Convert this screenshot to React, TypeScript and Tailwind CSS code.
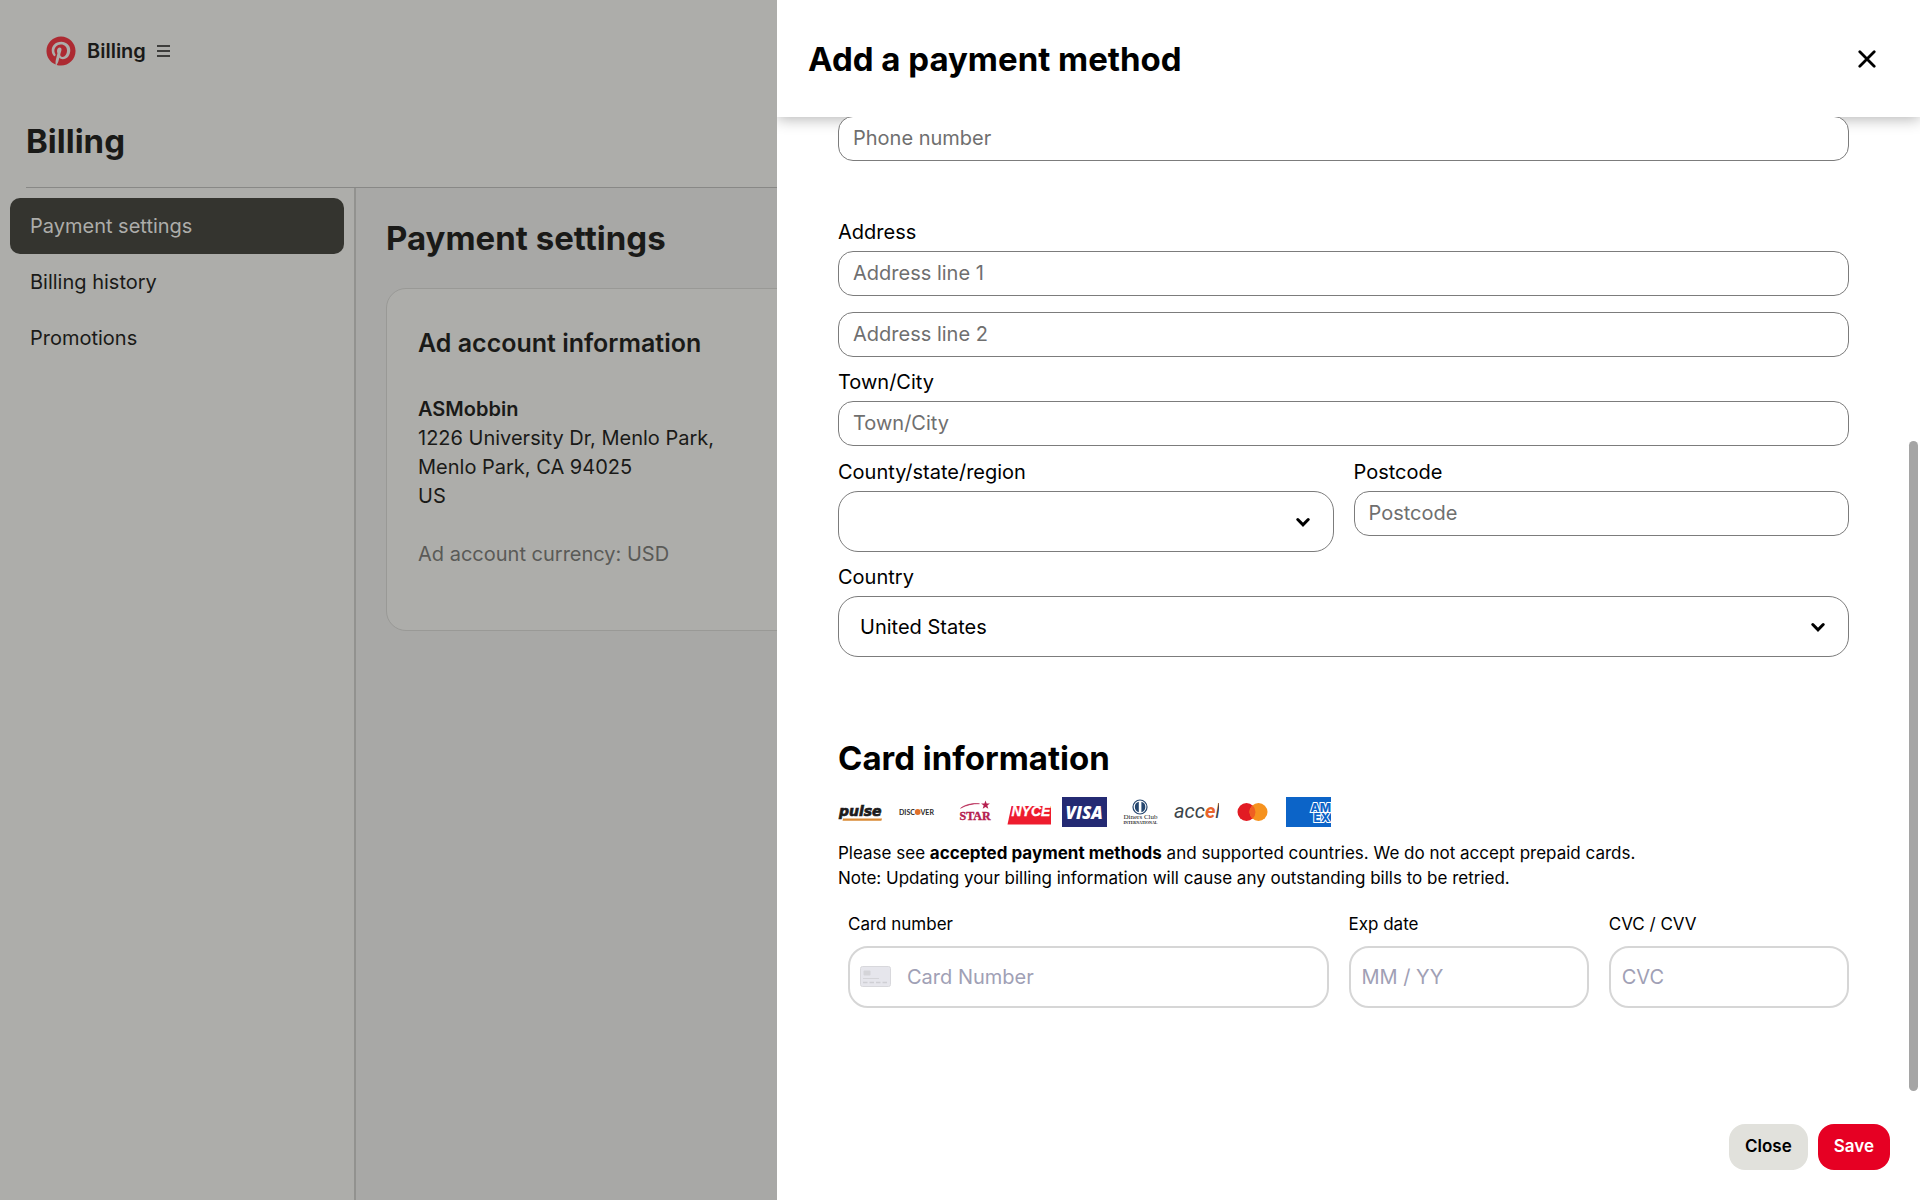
import { useState } from 'react'
import { FaPinterest } from 'react-icons/fa'

const navItems = ['Payment settings', 'Billing history', 'Promotions']

const inputClass =
    'block h-[45px] w-full rounded-[15px] border border-[#7c7c7c] bg-white px-[14px] pb-0.5 text-xl text-black outline-none placeholder:text-[#6f6f6f] focus:border-[#435ee5]'

const cardInputClass =
    'block h-[62px] w-full rounded-[20px] border-2 border-[#d6d6d6] bg-white pr-3 text-xl text-black outline-none placeholder:text-[#a0a0b5] focus:border-[#435ee5]'

type FieldProps = {
    id: string
    label?: string
    placeholder: string
}

function TextField({ id, label, placeholder }: FieldProps) {
    return (
        <div>
            {label && (
                <label htmlFor={id} className="block pb-[5px] text-xl leading-7">
                    {label}
                </label>
            )}
            <input id={id} type="text" aria-label={label ? undefined : placeholder} placeholder={placeholder} className={inputClass} />
        </div>
    )
}

function SelectField({ id, label, options }: { id: string; label: string; options: string[] }) {
    return (
        <div>
            <label htmlFor={id} className="block pb-[5px] text-xl leading-7">
                {label}
            </label>
            <div className="relative">
                <select
                    id={id}
                    className="block h-[61px] w-full appearance-none rounded-[20px] border border-[#7c7c7c] bg-white px-[21px] text-xl text-black outline-none focus:border-[#435ee5]"
                >
                    {options.map((option) => (
                        <option key={option}>{option}</option>
                    ))}
                </select>
                <svg
                    viewBox="0 0 14 10"
                    className="pointer-events-none absolute top-1/2 right-6 h-[10px] w-[14px] -translate-y-1/2"
                    fill="none"
                    stroke="#000"
                    strokeWidth="3"
                    strokeLinecap="round"
                >
                    <path d="M1.800 2.500 7 7.800 12.200 2.500" />
                </svg>
            </div>
        </div>
    )
}

function CardLogos() {
    return (
        <div className="flex gap-[11px]">
            <svg viewBox="0 0 45 30" className="h-[30px] w-[45px]" role="img" aria-label="Pulse">
                <text
                    x="1"
                    y="19"
                    fontFamily="DejaVu Sans, sans-serif"
                    fontSize="14"
                    fontWeight="700"
                    fontStyle="italic"
                    fill="#1c1c1c"
                    stroke="#1c1c1c"
                    strokeWidth=".7"
                >
                    pulse
                </text>
                <path d="M5 21.500h39l-.6 2.200H4.500z" fill="#d98a35" />
            </svg>
            <svg viewBox="0 0 45 30" className="h-[30px] w-[45px]" role="img" aria-label="Discover">
                <text x="5" y="17.500" fontFamily="Lato, sans-serif" fontSize="7" fontWeight="700" fill="#2b2b2b">
                    DISC
                </text>
                <circle cx="23.700" cy="15" r="2.900" fill="#e0702a" />
                <text x="26.500" y="17.500" fontFamily="Lato, sans-serif" fontSize="7" fontWeight="700" fill="#2b2b2b">
                    VER
                </text>
            </svg>
            <svg viewBox="0 0 45 30" className="h-[30px] w-[45px]" role="img" aria-label="Star">
                <path d="M10.500 11.300c4-3.600 12-5.400 19-4.600-7-.1-13 1.400-19 4.600z" fill="#b5204f" stroke="#b5204f" strokeWidth=".5" />
                <path d="m35.500 3.600 1.100 3h3.300l-2.600 2 1 3.200-2.800-1.900-2.800 1.900 1-3.200-2.600-2h3.300z" fill="#b5204f" />
                <text
                    x="9.500"
                    y="22.500"
                    fontFamily="Liberation Serif, serif"
                    fontSize="12"
                    fontWeight="700"
                    fill="#b5204f"
                    stroke="#b5204f"
                    strokeWidth=".4"
                >
                    STAR
                </text>
            </svg>
            <svg viewBox="0 0 45 30" className="h-[30px] w-[45px]" role="img" aria-label="NYCE">
                <path d="M5.500 9H45v18.500H1.500z" fill="#ee1c2e" />
                <text
                    x="5.500"
                    y="19"
                    fontFamily="Liberation Sans, sans-serif"
                    fontSize="14"
                    fontWeight="700"
                    fontStyle="italic"
                    fill="#fff"
                    stroke="#fff"
                    strokeWidth=".3"
                >
                    NYCE
                </text>
            </svg>
            <svg viewBox="0 0 45 30" className="h-[30px] w-[45px]" role="img" aria-label="Visa">
                <path d="M0 0h45v30H0z" fill="#242a73" />
                <text x="3.500" y="21.500" fontFamily="Open Sans, sans-serif" fontSize="17" fontWeight="800" fontStyle="italic" fill="#fff">
                    VISA
                </text>
            </svg>
            <svg viewBox="0 0 45 30" className="h-[30px] w-[45px]" role="img" aria-label="Diners Club International">
                <circle cx="22" cy="10" r="7" fill="#fff" stroke="#24466f" strokeWidth="1.200" />
                <path d="M20.800 4.800a5.400 5.400 0 0 0 0 10.400zM23.400 4.800a5.400 5.400 0 0 1 0 10.400z" fill="#24466f" />
                <text x="22.500" y="22.300" textAnchor="middle" fontFamily="Liberation Serif, serif" fontSize="7" fill="#222">
                    Diners Club
                </text>
                <text x="22.500" y="26.500" textAnchor="middle" fontFamily="Liberation Serif, serif" fontSize="4" fontWeight="700" fill="#222">
                    INTERNATIONAL
                </text>
            </svg>
            <svg viewBox="0 0 45 30" className="h-[30px] w-[45px]" role="img" aria-label="Accel">
                <text x="0" y="20.500" fontFamily="Roboto, sans-serif" fontSize="20" fontStyle="italic" fill="#3c4449">
                    acc<tspan fill="#e8642c" fontWeight="700">e</tspan>l
                </text>
            </svg>
            <svg viewBox="0 0 45 30" className="h-[30px] w-[45px]" role="img" aria-label="Mastercard">
                <circle cx="16.500" cy="15" r="9" fill="#e21b23" />
                <circle cx="28.500" cy="15" r="9" fill="#f6921e" />
                <path d="M22.500 8.300a9 9 0 0 1 0 13.400 9 9 0 0 1 0-13.400z" fill="#f05f22" />
            </svg>
            <svg viewBox="0 0 45 30" className="h-[30px] w-[45px]" role="img" aria-label="American Express">
                <path d="M0 0h45v30H0z" fill="#0c64c8" />
                <g fontFamily="Inter, sans-serif" fontSize="12" fontWeight="800" fill="#0c64c8" stroke="#fff" strokeWidth="2" paintOrder="stroke">
                    <text x="24.500" y="14.500">AM</text>
                    <text x="27.500" y="25">EX</text>
                </g>
            </svg>
        </div>
    )
}

function BillingPage() {
    return (
        <div className="flex min-h-screen flex-col text-[#1a1a18]">
            <header className="flex h-[102px] items-center gap-[11px] pl-[46px]">
                <FaPinterest size={30} color="#ad2a32" aria-label="Pinterest" />
                <span className="text-xl font-semibold">Billing</span>
                <button type="button" aria-label="Menu">
                    <svg viewBox="0 0 14 12" className="h-3 w-[14px]" stroke="#1a1a18" strokeWidth="1.300">
                        <path d="M0 1h13M0 6h13M0 11h13" />
                    </svg>
                </button>
            </header>
            <div className="ml-[26px] h-[86px] border-b border-[#888886]">
                <h1 className="pt-[17px] text-[33px] leading-[44px] font-bold">Billing</h1>
            </div>
            <div className="flex flex-1">
                <nav className="w-[356px] border-r-2 border-[#92928f] px-[10px] pt-[10px]">
                    {navItems.map((item, index) => (
                        <a
                            key={item}
                            href="#"
                            className={
                                index === 0
                                    ? 'flex h-14 items-center rounded-[10px] bg-[#34342f] px-5 text-xl text-[#adadaa]'
                                    : 'flex h-14 items-center rounded-[10px] px-5 text-xl'
                            }
                        >
                            {item}
                        </a>
                    ))}
                </nav>
                <main className="flex-1 bg-[#a8a8a6] px-[30px] pt-7">
                    <h2 className="text-[33px] leading-[44px] font-bold">Payment settings</h2>
                    <section className="mt-7 h-[343px] rounded-[20px] border border-[#999996] bg-[#adadaa] px-[31px] pt-9">
                        <h3 className="text-[25px] leading-9 font-semibold">Ad account information</h3>
                        <div className="mt-[34px] text-xl leading-[29px]">
                            <p className="font-semibold">ASMobbin</p>
                            <p>1226 University Dr, Menlo Park,</p>
                            <p>Menlo Park, CA 94025</p>
                            <p>US</p>
                        </div>
                        <p className="mt-[29px] text-xl leading-[29px] text-[#5a5a57]">Ad account currency: USD</p>
                    </section>
                </main>
            </div>
        </div>
    )
}

export default function App() {
    const [open, setOpen] = useState(true)

    return (
        <div className="h-screen overflow-hidden bg-[#adadaa] font-['Inter',sans-serif]">
            <BillingPage />
            {open && (
                <aside
                    role="dialog"
                    aria-label="Add a payment method"
                    className="fixed inset-y-0 right-0 flex w-3/5 max-w-[1143px] flex-col overflow-hidden bg-white text-black"
                >
                    <header className="flex h-[117px] shrink-0 items-center justify-between pr-[42px] pl-[31px] shadow-[0_2px_14px_rgba(0,0,0,0.3)]">
                        <h2 className="text-[33px] leading-[44px] font-bold">Add a payment method</h2>
                        <button type="button" aria-label="Dismiss" onClick={() => setOpen(false)} className="p-[2px]">
                            <svg viewBox="0 0 18 18" className="h-[18px] w-[18px]" stroke="#000" strokeWidth="2.800" strokeLinecap="round">
                                <path d="m1.800 1.800 14.400 14.400M16.200 1.800 1.800 16.200" />
                            </svg>
                        </button>
                    </header>

                    <div className="relative min-h-0 flex-1 overflow-hidden pr-[71px] pl-[61px]">
                        <form id="payment-form" className="-mt-px" onSubmit={(e) => e.preventDefault()}>
                            <TextField id="phone" placeholder="Phone number" />
                            <div className="mt-[57px]">
                                <TextField id="address1" label="Address" placeholder="Address line 1" />
                            </div>
                            <div className="mt-4">
                                <TextField id="address2" placeholder="Address line 2" />
                            </div>
                            <div className="mt-[11px]">
                                <TextField id="town" label="Town/City" placeholder="Town/City" />
                            </div>
                            <div className="mt-3 grid grid-cols-2 items-start gap-5">
                                <SelectField id="region" label="County/state/region" options={['']} />
                                <TextField id="postcode" label="Postcode" placeholder="Postcode" />
                            </div>
                            <div className="mt-[11px]">
                                <SelectField id="country" label="Country" options={['United States']} />
                            </div>

                            <h3 className="mt-[79px] mb-[17px] text-[33px] leading-[44px] font-bold">Card information</h3>
                            <CardLogos />
                            <p className="mt-[14px] text-[17px] leading-[25px]">
                                Please see{' '}
                                <a href="#" className="font-bold">
                                    accepted payment methods
                                </a>{' '}
                                and supported countries. We do not accept prepaid cards.
                                <br />
                                Note: Updating your billing information will cause any outstanding bills to be retried.
                            </p>
                            <div className="mt-[21px] grid grid-cols-[2fr_1fr_1fr] gap-5 pl-[10px] text-[17px] leading-6">
                                <div>
                                    <label htmlFor="card" className="block pb-[10px]">
                                        Card number
                                    </label>
                                    <div className="relative">
                                        <input id="card" type="text" placeholder="Card Number" className={cardInputClass + ' pl-[57px]'} />
                                        <svg viewBox="0 0 31 21" className="absolute top-[20px] left-3 h-[21px] w-[31px]">
                                            <rect x=".5" y=".5" width="30" height="20" rx="2" fill="#e6e6ec" stroke="#d8d8dc" />
                                            <rect x="3.500" y="4.500" width="7" height="5" rx="1" fill="#d4d4d8" />
                                            <path d="M3 12.500h16" stroke="#d4d4d8" />
                                            <path d="M3 16.500h24" stroke="#cfcfd4" strokeWidth="1.600" strokeDasharray="4.500 2" />
                                        </svg>
                                    </div>
                                </div>
                                <div>
                                    <label htmlFor="exp" className="block pb-[10px]">
                                        Exp date
                                    </label>
                                    <input id="exp" type="text" placeholder="MM / YY" className={cardInputClass + ' pl-[11px]'} />
                                </div>
                                <div>
                                    <label htmlFor="cvc" className="block pb-[10px]">
                                        CVC / CVV
                                    </label>
                                    <input id="cvc" type="text" placeholder="CVC" className={cardInputClass + ' pl-[11px]'} />
                                </div>
                            </div>
                        </form>
                        {/* scroll thumb */}
                        <div className="absolute right-[2px] bottom-0 h-[650px] w-[9px] rounded-full bg-[#a5a5a5]" />
                    </div>

                    <footer className="flex h-[109px] shrink-0 items-center justify-end gap-[10px] pt-0.5 pr-[30px]">
                        <button type="button" onClick={() => setOpen(false)} className="h-[46px] rounded-2xl bg-[#e1e1dc] px-4 text-[17px] font-semibold">
                            Close
                        </button>
                        <button type="submit" form="payment-form" className="h-[46px] rounded-2xl bg-[#e60023] px-4 text-[17px] font-semibold text-white">
                            Save
                        </button>
                    </footer>
                </aside>
            )}
        </div>
    )
}
